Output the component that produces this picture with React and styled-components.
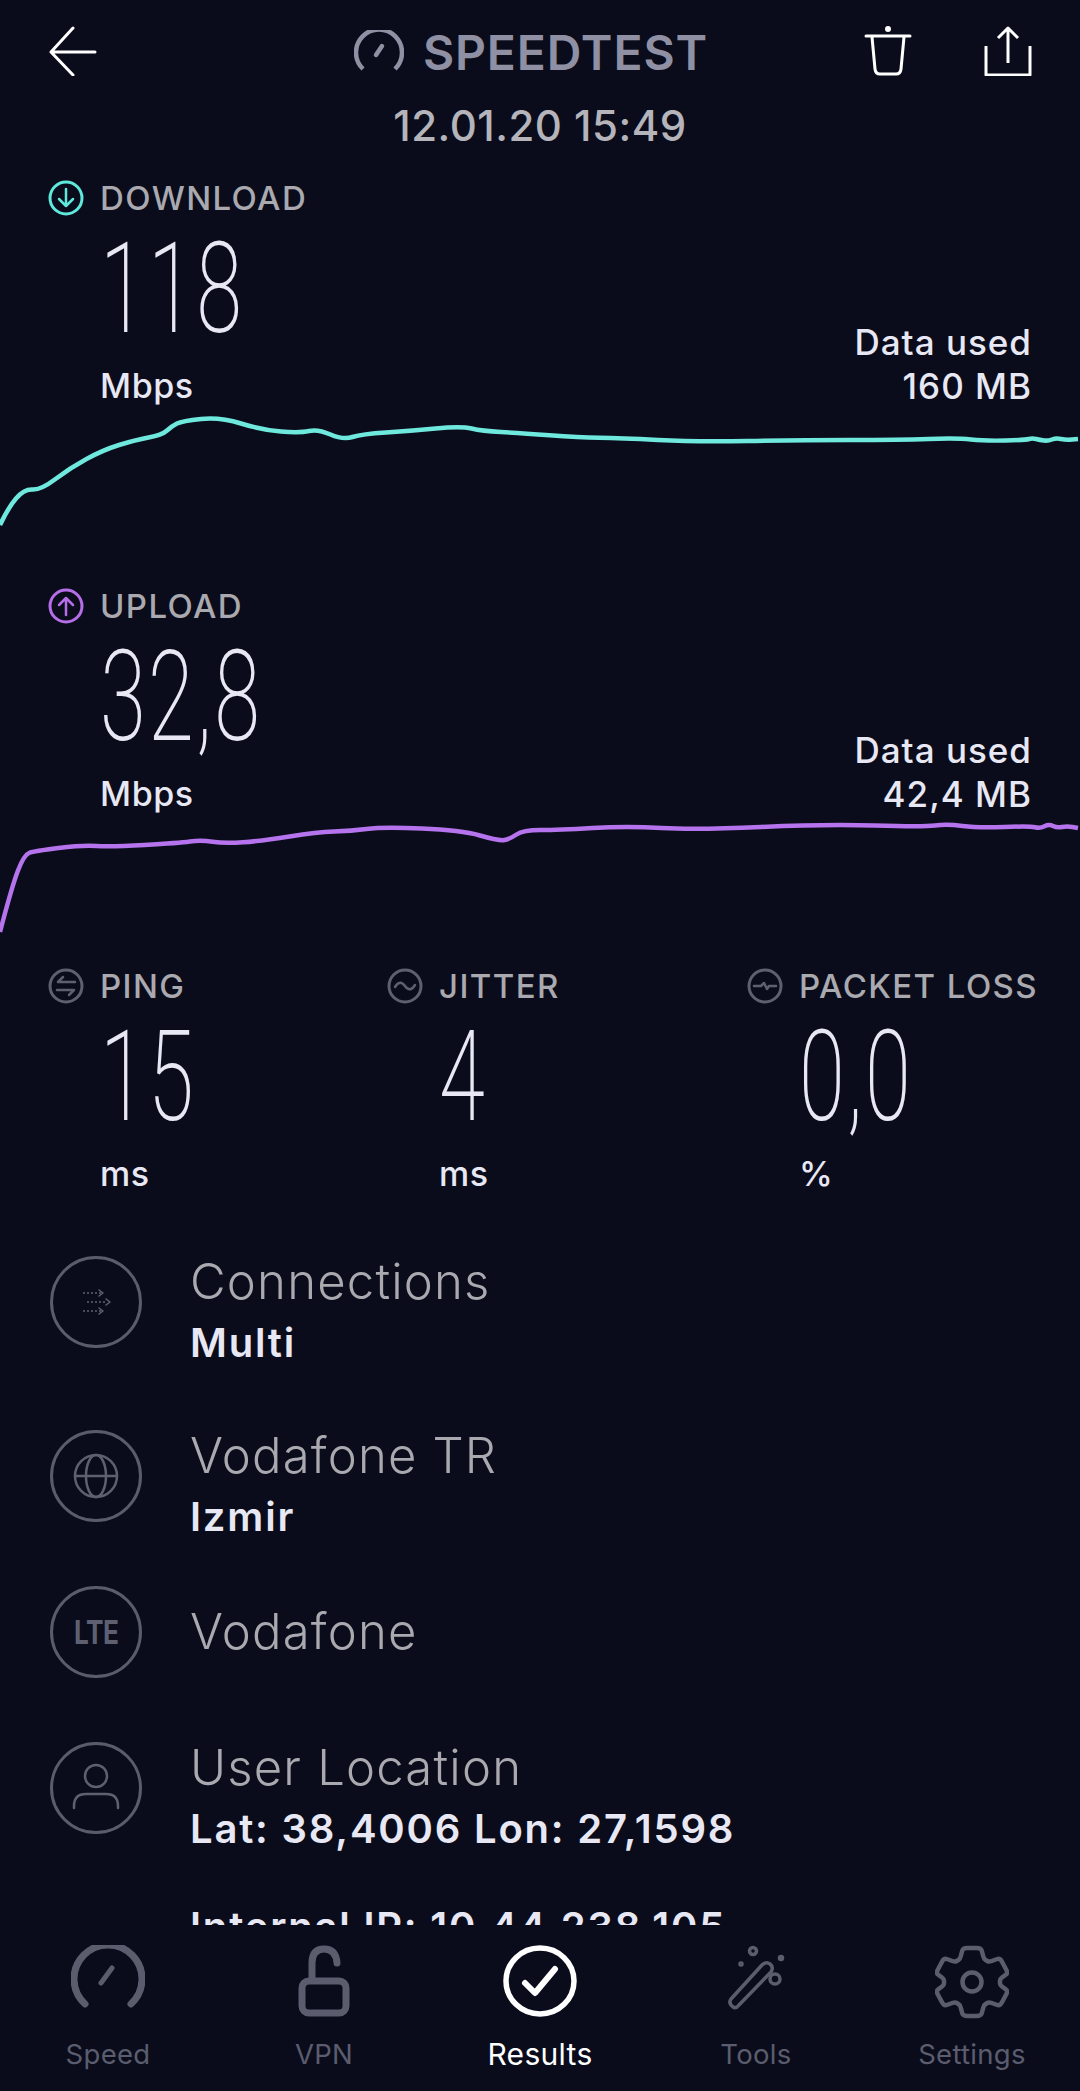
import React from 'react';
import styled, { createGlobalStyle } from 'styled-components';

const GlobalStyle = createGlobalStyle`
  html, body {
    margin: 0;
    background: #0a0c1b;
  }
  * {
    box-sizing: border-box;
  }
`;

const Screen = styled.div`
  width: 1080px;
  height: 2091px;
  display: flex;
  flex-direction: column;
  background: #0a0c1b;
  font-family: Inter, "Liberation Sans", sans-serif;
  overflow: hidden;
`;

const Content = styled.div`
  height: 1925px;
  overflow: hidden;
`;

const Header = styled.header`
  height: 100px;
  padding: 26px 48px 0;
  display: grid;
  grid-template-columns: 1fr auto 1fr;
  align-items: start;
`;

const HeaderRight = styled.div`
  display: flex;
  justify-content: flex-end;
  gap: 72px;
`;

const Title = styled.div`
  display: flex;
  align-items: center;
  gap: 19px;
  height: 52px;
  padding-right: 18px;
  color: #8f90a3;
  font-size: 48px;
  font-weight: 600;
  letter-spacing: 0.9px;
`;

const DateLine = styled.div`
  height: 52px;
  margin-bottom: 24px;
  line-height: 52px;
  text-align: center;
  color: #b4b4ba;
  font-size: 42px;
  font-weight: 500;
  letter-spacing: 0.5px;
`;

const Section = styled.section`
  height: 408px;
`;

const SectionTop = styled.div`
  display: flex;
  justify-content: space-between;
  align-items: flex-end;
  height: 232px;
  padding: 0 48px;
`;

const LabelRow = styled.div`
  display: flex;
  align-items: center;
  gap: 16px;
  height: 44px;
`;

const Label = styled.span`
  color: #a9a9af;
  font-size: 33px;
  font-weight: 500;
  letter-spacing: 1.4px;
  white-space: nowrap;
`;

const Value = styled.div`
  height: 144px;
  padding-left: 52px;
  line-height: 138px;
  color: #e8e8f4;
  font-family: Roboto, sans-serif;
  font-size: 126px;
  font-weight: 200;
  letter-spacing: 3.5px;
  transform: scaleX(0.66);
  transform-origin: 52px 0;
`;

const Unit = styled.div`
  height: 44px;
  line-height: 44px;
  padding-left: 52px;
  color: #e8e8f4;
  font-size: 34px;
  font-weight: 500;
  letter-spacing: 0.6px;
`;

const DataUsed = styled.div`
  text-align: right;
  line-height: 44px;
  color: #e8e8f4;
  font-size: 35px;
  font-weight: 500;
  letter-spacing: 1px;
`;

const GraphSvg = styled.svg`
  display: block;
  width: 1080px;
  height: 120px;
`;

const Metrics = styled.div`
  display: grid;
  grid-template-columns: 339px 360px 285px;
  height: 232px;
  margin: -28px 0 60px 48px;
`;

const Row = styled.div`
  display: flex;
  align-items: ${p => (p.$center ? 'center' : 'flex-start')};
  gap: 48px;
  height: ${p => (p.$center ? 92 : p.$h)}px;
  margin-bottom: ${p => (p.$center ? 64 : 0)}px;
  padding-left: 50px;
`;

const Circle = styled.div`
  flex: none;
  width: 92px;
  height: 92px;
  display: flex;
  align-items: center;
  justify-content: center;
  border: 3px solid #5a5c6d;
  border-radius: 50%;
  color: #5e6072;
`;

const Lte = styled.span`
  font-size: 32px;
  font-weight: 700;
  letter-spacing: -0.5px;
  transform: scaleX(0.82);
`;

const RowText = styled.div`
  margin-top: ${p => (p.$center ? 0 : -4)}px;
`;

const RowTitle = styled.div`
  height: 60px;
  line-height: 60px;
  color: #a9a9af;
  font-size: 49px;
  font-weight: 300;
  letter-spacing: 1.2px;
`;

const RowSub = styled.div`
  height: 44px;
  line-height: 44px;
  margin-top: ${p => p.$mt || 9}px;
  color: #e8e8f4;
  font-size: 40px;
  font-weight: 600;
  letter-spacing: 1.8px;
  white-space: nowrap;
`;

const TabBar = styled.nav`
  flex: 1;
  display: grid;
  grid-template-columns: repeat(5, 1fr);
`;

const Tab = styled.div`
  display: flex;
  flex-direction: column;
  align-items: center;
  padding-top: 20px;
  color: ${p => (p.$active ? '#ffffff' : '#5b5d6e')};
`;

const TabIcon = styled.div`
  height: 89px;
  display: flex;
  align-items: flex-start;
  justify-content: center;
`;

const TabLabel = styled.span`
  line-height: 40px;
  font-size: ${p => (p.$active ? 30 : 27.5)}px;
  letter-spacing: 0.3px;
`;

const smooth = pts => {
  let d = `M${pts[0][0]} ${pts[0][1]}`;
  for (let i = 1; i < pts.length - 1; i++) {
    const mx = (pts[i][0] + pts[i + 1][0]) / 2;
    const my = (pts[i][1] + pts[i + 1][1]) / 2;
    d += ` Q${pts[i][0]} ${pts[i][1]} ${mx} ${my}`;
  }
  const last = pts[pts.length - 1];
  return `${d} L${last[0]} ${last[1]}`;
};

// closed outline through the midpoints of a polygon's edges, corners rounded
const roundedLoop = pts => {
  const mid = (a, b) => [(a[0] + b[0]) / 2, (a[1] + b[1]) / 2];
  let d = '';
  pts.forEach((p, i) => {
    const prev = pts[(i + pts.length - 1) % pts.length];
    const next = pts[(i + 1) % pts.length];
    const a = mid(mid(prev, p), p);
    const b = mid(p, mid(p, next));
    d += `${i === 0 ? 'M' : 'L'}${a[0]} ${a[1]} Q${p[0]} ${p[1]} ${b[0]} ${b[1]} `;
  });
  return `${d}Z`;
};

const gearPts = [
  [28, 3], [46, 3], [49, 14], [54, 17], [65, 13], [73, 28], [65, 34], [65, 40], [73, 46], [65, 61],
  [54, 57], [49, 60], [46, 71], [28, 71], [25, 60], [20, 57], [9, 61], [1, 46], [9, 40], [9, 34], [1, 28], [9, 13], [20, 17], [25, 14],
];

const downloadPts = [
  [0, 117], [8, 100], [24, 81], [41, 82], [70, 60], [103, 42], [135, 32], [162, 27], [172, 18], [182, 13],
  [220, 9], [262, 22], [300, 25], [318, 21], [343, 32], [362, 26], [410, 23], [461, 18], [482, 23], [520, 25],
  [579, 29.5], [620, 30], [696, 34], [800, 32], [900, 32], [957, 30], [985, 33], [1026, 32], [1032, 30],
  [1040, 32], [1048, 33], [1056, 30], [1066, 32], [1078, 31],
];

const uploadPts = [
  [0, 116], [12, 70], [24, 39], [34, 35], [83, 29], [110, 31], [179, 27], [201, 24], [224, 27.5], [262, 25],
  [317, 16], [351, 15], [382, 11], [461, 14], [499, 25], [510, 23], [523, 14], [558, 14], [627, 10], [696, 14],
  [826, 8], [923, 11], [947, 8], [978, 12], [1030, 10], [1040, 12.5], [1049, 8], [1057, 12], [1067, 10], [1078, 12],
];

const Graph = ({ points, color }) => (
  <GraphSvg viewBox="0 0 1080 120">
    <path d={smooth(points)} fill="none" stroke={color} strokeWidth="4.5" strokeLinejoin="round" />
  </GraphSvg>
);

const Ico = ({ w, h, sw = 3, color = 'currentColor', children }) => (
  <svg width={w} height={h} viewBox={`0 0 ${w} ${h}`} fill="none" stroke={color} strokeWidth={sw} strokeLinecap="round" strokeLinejoin="round" style={{ display: 'block', flex: 'none' }}>
    {children}
  </svg>
);

const BackIcon = () => (
  <Ico w={50} h={50} color="#fff"><path d="M47 26H3M25 2L3 26l22 23" /></Ico>
);

const GaugeTitleIcon = () => (
  <Ico w={50} h={44} sw={4.5} color="#8f90a3">
    <path d="M9 39A23 23 0 1 1 41 39" strokeLinecap="butt" />
    <path d="M22 25l6-9" />
  </Ico>
);

const TrashIcon = () => (
  <Ico w={48} h={50} color="#fff">
    <path d="M2 10h44M8 11l3 32q.5 5 5 5h16q4.500 0 5-5l3-32" />
    <circle cx="24" cy="3" r="1.5" fill="#fff" />
  </Ico>
);

const ShareIcon = () => (
  <Ico w={48} h={50} color="#fff">
    <path d="M2 20v29h44V20M24 37V3M14 12l10-10 10 10" strokeLinecap="butt" />
  </Ico>
);

const DownArrowIcon = () => (
  <Ico w={36} h={36} color="#5fe8dc">
    <circle cx="18" cy="18" r="16" />
    <path d="M18 9v17M11 19l7 7 7-7" strokeWidth="2.500" />
  </Ico>
);

const UpArrowIcon = () => (
  <Ico w={36} h={36} color="#b66ee8">
    <circle cx="18" cy="18" r="16" />
    <path d="M18 27V10M11 17l7-7 7 7" strokeWidth="2.500" />
  </Ico>
);

const PingIcon = () => (
  <Ico w={36} h={36} color="#5e6072">
    <circle cx="18" cy="18" r="16" />
    <path d="M27 14H10l5-5M9 22h17l-5 5" strokeWidth="2.500" />
  </Ico>
);

const JitterIcon = () => (
  <Ico w={36} h={36} color="#5e6072">
    <circle cx="18" cy="18" r="16" />
    <path d="M8 19q5-8 10-1t10-1" strokeWidth="2.500" />
  </Ico>
);

const LossIcon = () => (
  <Ico w={36} h={36} color="#5e6072">
    <circle cx="18" cy="18" r="16" />
    <path d="M7 18h7l3-3 3 6 2-3h7" strokeWidth="2.500" />
  </Ico>
);

const ConnectionsIcon = () => (
  <Ico w={30} h={28} sw={1.5}>
    <path d="M2 5h19M6 14h20M2 23h19" strokeDasharray="2 2" strokeLinecap="butt" />
    <path d="M18 2l4 3-4 3M25 11l4 3-4 3M18 20l4 3-4 3" />
  </Ico>
);

const GlobeIcon = () => (
  <Ico w={46} h={46} sw={2.5}>
    <circle cx="23" cy="23" r="21" />
    <ellipse cx="23" cy="23" rx="10" ry="21" />
    <path d="M2 23h42" />
  </Ico>
);

const UserIcon = () => (
  <Ico w={48} h={52} sw={2.5}>
    <circle cx="24" cy="14" r="11" />
    <path d="M2 46v-2q0-12 12-12h20q12 0 12 12v2" />
  </Ico>
);

const SpeedIcon = () => (
  <Ico w={74} h={64} sw={7}>
    <path d="M14 59A34 34 0 1 1 60 59" />
    <path d="M30 38l11-15" strokeWidth="5" />
  </Ico>
);

const LockIcon = () => (
  <Ico w={52} h={72} sw={7}>
    <rect x="4" y="36" width="44" height="32" rx="7" />
    <path d="M14 33V18q0-14 12-14t13 14" />
  </Ico>
);

const ResultsIcon = () => (
  <Ico w={74} h={72} sw={5.500}>
    <ellipse cx="37" cy="36" rx="34" ry="33" />
    <path d="M22 38l10 10 20-24" strokeWidth="6" />
  </Ico>
);

const WandIcon = () => (
  <Ico w={60} h={66} sw={3.500}>
    <path d="M7 62q-5-4-2-8L36 20q4-4 8-1t1 8L13 60q-3 4-6 2Z" />
    <circle cx="27" cy="6" r="3.500" />
    <circle cx="49" cy="34" r="5" />
    <circle cx="55" cy="13" r="1.500" fill="currentColor" />
    <circle cx="15" cy="19" r="1" fill="currentColor" />
  </Ico>
);

const GearIcon = () => (
  <Ico w={74} h={74} sw={4.500}>
    <path d={roundedLoop(gearPts)} />
    <circle cx="37" cy="37" r="9.500" />
  </Ico>
);

const Metric = ({ icon, label, value, unit }) => (
  <div>
    <LabelRow>{icon}<Label>{label}</Label></LabelRow>
    <Value>{value}</Value>
    <Unit>{unit}</Unit>
  </div>
);

const tabs = [
  { label: 'Speed', icon: <SpeedIcon /> },
  { label: 'VPN', icon: <LockIcon /> },
  { label: 'Results', icon: <ResultsIcon />, active: true },
  { label: 'Tools', icon: <WandIcon /> },
  { label: 'Settings', icon: <GearIcon /> },
];

export default function App() {
  return (
    <Screen>
      <GlobalStyle />
      <Content>
        <Header>
          <BackIcon />
          <Title><GaugeTitleIcon />SPEEDTEST</Title>
          <HeaderRight><TrashIcon /><ShareIcon /></HeaderRight>
        </Header>
        <DateLine>12.01.20 15:49</DateLine>

        <Section>
          <SectionTop>
            <Metric icon={<DownArrowIcon />} label="DOWNLOAD" value="118" unit="Mbps" />
            <DataUsed>Data used<br />160 MB</DataUsed>
          </SectionTop>
          <Graph points={downloadPts} color="#6fe9dd" />
        </Section>
        <Section>
          <SectionTop>
            <Metric icon={<UpArrowIcon />} label="UPLOAD" value="32,8" unit="Mbps" />
            <DataUsed>Data used<br />42,4 MB</DataUsed>
          </SectionTop>
          <Graph points={uploadPts} color="#b673ee" />
        </Section>

        <Metrics>
          <Metric icon={<PingIcon />} label="PING" value="15" unit="ms" />
          <Metric icon={<JitterIcon />} label="JITTER" value="4" unit="ms" />
          <Metric icon={<LossIcon />} label="PACKET LOSS" value="0,0" unit="%" />
        </Metrics>

        <Row $h={174}>
          <Circle><ConnectionsIcon /></Circle>
          <RowText>
            <RowTitle>Connections</RowTitle>
            <RowSub>Multi</RowSub>
          </RowText>
        </Row>
        <Row $h={156}>
          <Circle><GlobeIcon /></Circle>
          <RowText>
            <RowTitle>Vodafone TR</RowTitle>
            <RowSub>Izmir</RowSub>
          </RowText>
        </Row>
        <Row $center>
          <Circle><Lte>LTE</Lte></Circle>
          <RowText $center>
            <RowTitle>Vodafone</RowTitle>
          </RowText>
        </Row>
        <Row $h={200}>
          <Circle><UserIcon /></Circle>
          <RowText>
            <RowTitle>User Location</RowTitle>
            <RowSub>Lat: 38,4006 Lon: 27,1598</RowSub>
            <RowSub $mt={54}>Internal IP: 10.44.238.105</RowSub>
          </RowText>
        </Row>
      </Content>
      <TabBar>
        {tabs.map(t => (
          <Tab key={t.label} $active={t.active}>
            <TabIcon>{t.icon}</TabIcon>
            <TabLabel $active={t.active}>{t.label}</TabLabel>
          </Tab>
        ))}
      </TabBar>
    </Screen>
  );
}
